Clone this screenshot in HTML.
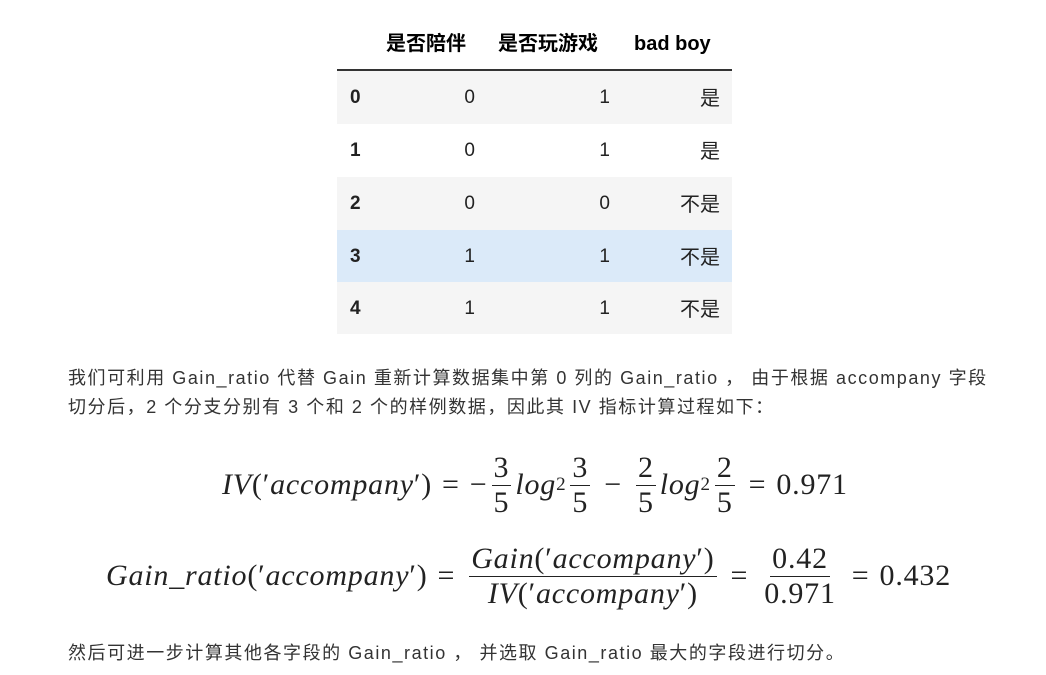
<!DOCTYPE html>
<html><head><meta charset="utf-8"><style>
body{margin:0;width:1046px;height:675px;background:#fff;position:relative;overflow:hidden;font-family:"Liberation Sans","Noto Sans CJK SC",sans-serif;color:#333}
.hd{position:absolute;top:24px;height:40px;line-height:40px;font-weight:bold;font-size:20px;color:#000}
.line{position:absolute;left:337px;top:69px;width:395px;height:2px;background:#333}
.r{position:absolute;left:337px;width:395px;height:53px;font-size:19px;color:#222}
.r span{position:absolute;top:0;height:53px;line-height:53px}
.r span.c{font-size:20px;line-height:56px}
.p{position:absolute;left:68px;font-size:18px;letter-spacing:1.55px;color:#333;white-space:nowrap;line-height:24px}
.m{position:absolute;font-family:"Liberation Serif",serif;font-size:30px;letter-spacing:0.8px;color:#222;white-space:nowrap;display:flex;align-items:center}
.i{font-style:italic}
.o{margin:0 10px}
.fr{display:inline-flex;flex-direction:column;align-items:center;margin:0 4px}
.fr>span{line-height:1.12;padding:0 2px}
.fr>span:first-child{border-bottom:1.5px solid #222}
sub{font-size:19px;vertical-align:-6px}
</style></head><body>
<div class="hd" style="left:386px">是否陪伴</div>
<div class="hd" style="left:498px">是否玩游戏</div>
<div class="hd" style="left:634px">bad boy</div>
<div class="line"></div>
<div class="r" style="top:71px;background:#f5f5f5"><span style="left:13px;font-weight:bold">0</span><span style="right:257px">0</span><span style="right:122px">1</span><span class="c" style="right:12px">是</span></div>
<div class="r" style="top:124px;background:#fff"><span style="left:13px;font-weight:bold">1</span><span style="right:257px">0</span><span style="right:122px">1</span><span class="c" style="right:12px">是</span></div>
<div class="r" style="top:177px;background:#f5f5f5"><span style="left:13px;font-weight:bold">2</span><span style="right:257px">0</span><span style="right:122px">0</span><span class="c" style="right:12px">不是</span></div>
<div class="r" style="top:230px;background:#dbeaf9"><span style="left:13px;font-weight:bold">3</span><span style="right:257px">1</span><span style="right:122px">1</span><span class="c" style="right:12px">不是</span></div>
<div class="r" style="top:282px;background:#f5f5f5;height:52px"><span style="left:13px;font-weight:bold">4</span><span style="right:257px">1</span><span style="right:122px">1</span><span class="c" style="right:12px">不是</span></div>
<div class="p" style="top:366px">我们可利用 Gain_ratio 代替 Gain 重新计算数据集中第 0 列的 Gain_ratio ， 由于根据 accompany 字段</div>
<div class="p" style="top:395px">切分后，2 个分支分别有 3 个和 2 个的样例数据，因此其 IV 指标计算过程如下：</div>
<div class="m" style="left:222px;top:452px;height:66px"><span class="i">IV</span>(′<span class="i">accompany</span>′)<span class="o">=</span>−<span class="fr"><span>3</span><span>5</span></span><span class="i">log</span><sub>2</sub><span class="fr"><span>3</span><span>5</span></span><span class="o">−</span><span class="fr"><span>2</span><span>5</span></span><span class="i">log</span><sub>2</sub><span class="fr"><span>2</span><span>5</span></span><span class="o">=</span>0.971</div>
<div class="m" style="left:106px;top:537px;height:78px"><span class="i">Gain_ratio</span>(′<span class="i">accompany</span>′)<span class="o">=</span><span class="fr"><span><span class="i">Gain</span>(′<span class="i">accompany</span>′)</span><span><span class="i">IV</span>(′<span class="i">accompany</span>′)</span></span><span class="o">=</span><span class="fr"><span>0.42</span><span>0.971</span></span><span class="o">=</span>0.432</div>
<div class="p" style="top:641px">然后可进一步计算其他各字段的 Gain_ratio ， 并选取 Gain_ratio 最大的字段进行切分。</div>
</body></html>
